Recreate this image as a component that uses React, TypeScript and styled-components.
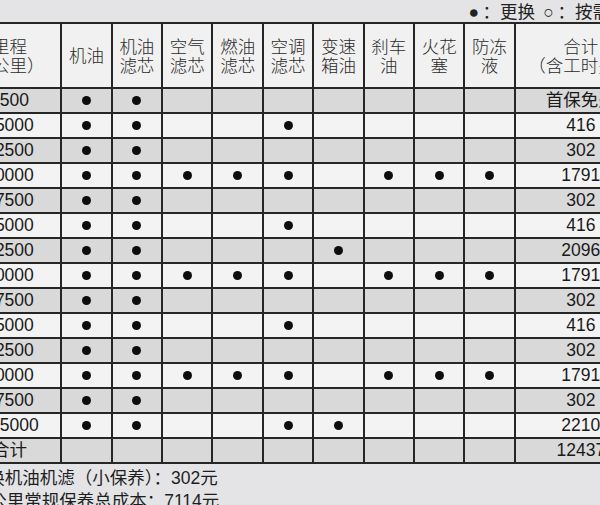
import React from "react";
import styled, { createGlobalStyle } from "styled-components";

const GlobalStyle = createGlobalStyle`
  html, body {
    margin: 0;
    padding: 0;
    background: #e4e4e6;
    overflow: hidden;
  }
  body {
    font-family: "Liberation Sans", "Noto Sans CJK SC", sans-serif;
    color: #1c1c1c;
  }
`;

const Page = styled.div`
  width: 600px;
  height: 505px;
  overflow: hidden;
  background: #e4e4e6;
`;

const Sheet = styled.div`
  width: 691.2px;
  margin-left: -43.3px;
`;

const Legend = styled.div`
  height: 22px;
  box-sizing: border-box;
  display: flex;
  justify-content: flex-end;
  align-items: center;
  padding: 3px 3px 0 0;
  font-size: 17.5px;
  line-height: 19px;
  color: #222;
  white-space: pre;
`;

const Mark = styled.span`
  display: inline-block;
  width: 17.5px;
  text-align: center;
`;

const Grid = styled.div`
  display: grid;
  grid-template-columns: 101.6px repeat(9, 48.4px) 130px;
  grid-template-rows: 63px repeat(15, 23px);
  gap: 2px;
  padding: 2px;
  background: #262626;
`;

const HeadCell = styled.div`
  background: #f1f1f1;
  display: flex;
  align-items: center;
  justify-content: center;
  text-align: center;
  font-size: 17.5px;
  line-height: 19px;
  color: #2a2a2a;
  padding-top: 2px;
  white-space: pre;
  font-weight: 300;
`;

const Cell = styled.div<{ $shade: boolean }>`
  background: ${(p) => (p.$shade ? "#d9d9d9" : "#f3f3f3")};
  display: flex;
  align-items: center;
  justify-content: center;
  font-size: 17.5px;
  line-height: 23px;
  color: #1a1a1a;
  white-space: nowrap;
`;

const Dot = styled.span`
  width: 9px;
  height: 9px;
  border-radius: 50%;
  background: #0d0d0d;
`;

const Notes = styled.div`
  margin-left: -4.5px;
  padding-top: 3px;
  font-size: 17.5px;
  line-height: 23px;
  color: #1e1e1e;
  white-space: nowrap;
`;

const headers = [
  "里程\n（公里）",
  "机油",
  "机油\n滤芯",
  "空气\n滤芯",
  "燃油\n滤芯",
  "空调\n滤芯",
  "变速\n箱油",
  "刹车\n油",
  "火花\n塞",
  "防冻\n液",
  "合计\n（含工时费）",
];

type Row = { km: string; marks: number[]; total: string };

const big = [0, 1, 2, 3, 4, 6, 7, 8];

const rows: Row[] = [
  { km: "7500", marks: [0, 1], total: "首保免费" },
  { km: "15000", marks: [0, 1, 4], total: "416" },
  { km: "22500", marks: [0, 1], total: "302" },
  { km: "30000", marks: big, total: "1791" },
  { km: "37500", marks: [0, 1], total: "302" },
  { km: "45000", marks: [0, 1, 4], total: "416" },
  { km: "52500", marks: [0, 1, 5], total: "2096" },
  { km: "60000", marks: big, total: "1791" },
  { km: "67500", marks: [0, 1], total: "302" },
  { km: "75000", marks: [0, 1, 4], total: "416" },
  { km: "82500", marks: [0, 1], total: "302" },
  { km: "90000", marks: big, total: "1791" },
  { km: "97500", marks: [0, 1], total: "302" },
  { km: "105000", marks: [0, 1, 4, 5], total: "2210" },
  { km: "合计", marks: [], total: "12437" },
];

export default function App() {
  return (
    <Page>
      <GlobalStyle />
      <Sheet>
        <Legend>
          <Mark>●</Mark>：更换 <Mark>○</Mark>：按需更换
        </Legend>
        <Grid>
          {headers.map((h) => (
            <HeadCell key={h}>{h}</HeadCell>
          ))}
          {rows.map((r, i) => {
            const shade = i % 2 === 0;
            return (
              <React.Fragment key={r.km}>
                <Cell $shade={shade}>{r.km}</Cell>
                {Array.from({ length: 9 }).map((_, c) => (
                  <Cell $shade={shade} key={c}>
                    {r.marks.includes(c) ? <Dot /> : null}
                  </Cell>
                ))}
                <Cell $shade={shade}>{r.total}</Cell>
              </React.Fragment>
            );
          })}
        </Grid>
        <Notes>
          仅更换机油机滤（小保养）：302元
          <br />
          10万公里常规保养总成本：7114元
        </Notes>
      </Sheet>
    </Page>
  );
}
